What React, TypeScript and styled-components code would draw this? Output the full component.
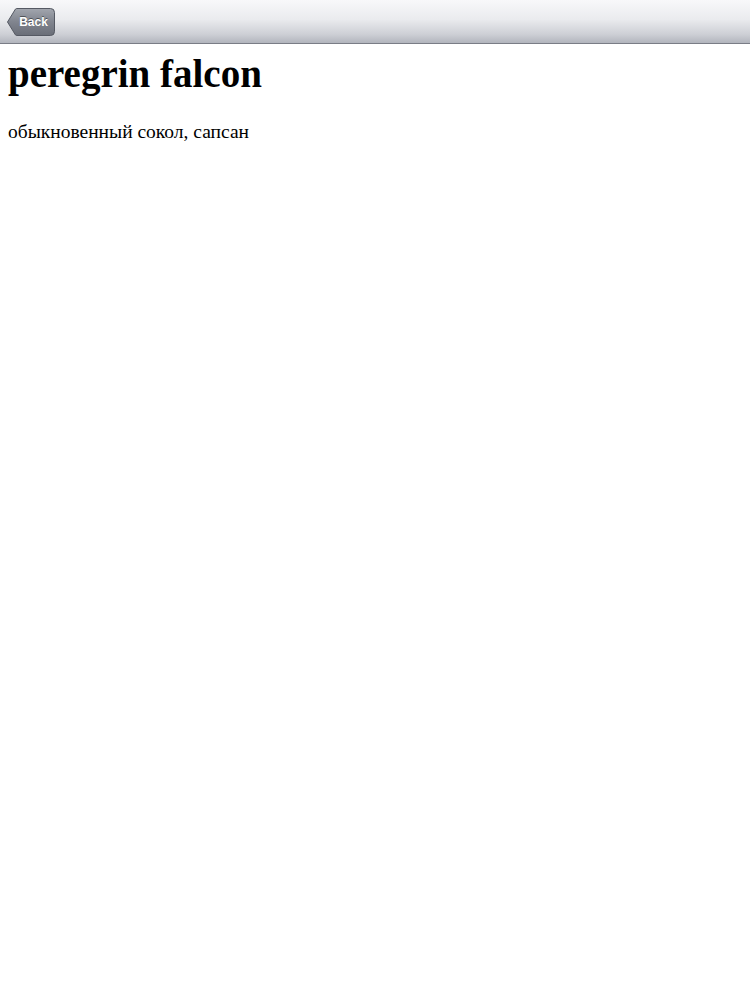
import React from "react";
import styled, { createGlobalStyle } from "styled-components";

const Global = createGlobalStyle`
  html, body { margin: 0; padding: 0; background: #fff; }
  body { font-family: "Liberation Serif", "Times New Roman", serif; color: #000; }
`;

const NavBar = styled.div`
  height: 43px;
  border-bottom: 1px solid #7a7d86;
  background: linear-gradient(#f8f8fa 0%, #eaebee 45%, #cdcfd5 80%, #b2b5bd 100%);
  display: flex;
  align-items: center;
  padding-left: 7px;
`;

const BackButton = styled.button`
  position: relative;
  width: 48px;
  height: 28px;
  padding: 0 0 0 5px;
  border: none;
  background: transparent;
  color: #fff;
  font-family: "Liberation Sans", Arial, sans-serif;
  font-weight: bold;
  font-size: 12px;
  text-shadow: 0 -1px 0 rgba(0,0,0,0.45);
  cursor: pointer;
`;

const ButtonShape = styled.svg`
  position: absolute;
  left: 0;
  top: 0;
  width: 48px;
  height: 28px;
  overflow: visible;
`;

const Label = styled.span`
  position: relative;
`;

const Content = styled.main`
  padding: 0 8px;
`;

const Title = styled.h1`
  font-size: 39px;
  font-weight: bold;
  margin: 8px 0 25px;
  line-height: 44px;
`;

const Body = styled.p`
  font-size: 19.5px;
  margin: 0;
  line-height: 22px;
`;

export default function App() {
  return (
    <>
      <Global />
      <NavBar>
        <BackButton>
          <ButtonShape viewBox="0 0 48 28">
            <defs>
              <linearGradient id="bb" x1="0" y1="0" x2="0" y2="1">
                <stop offset="0" stopColor="#a2a6ae" />
                <stop offset="0.5" stopColor="#80848e" />
                <stop offset="1" stopColor="#6a6e78" />
              </linearGradient>
            </defs>
            <path
              d="M0.5 14 L8.5 1 Q9.2 0.5 10 0.5 L43.5 0.5 Q47.5 0.5 47.5 4.5 L47.5 23.5 Q47.5 27.5 43.5 27.5 L10 27.5 Q9.2 27.5 8.5 27 Z"
              fill="url(#bb)"
              stroke="#555963"
              strokeWidth="1"
            />
            <path d="M1.5 14.5 L9 26.8 L43.5 26.8" fill="none" stroke="rgba(255,255,255,0.0)" />
          </ButtonShape>
          <Label>Back</Label>
        </BackButton>
      </NavBar>
      <Content>
        <Title>peregrin falcon</Title>
        <Body>обыкновенный сокол, сапсан</Body>
      </Content>
    </>
  );
}
